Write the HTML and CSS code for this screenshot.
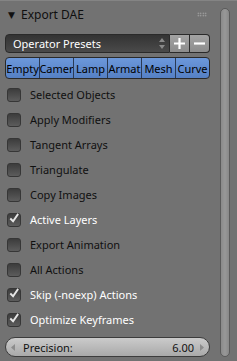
FILE: index.html
```html
<!DOCTYPE html>
<html>
<head>
<meta charset="utf-8">
<link rel="stylesheet" href="styles.css">
</head>
<body>
<div class="panel">
  <div class="header">
    <span class="tri">▼</span>
    <span class="title">Export DAE</span>
    <span class="grip"></span>
  </div>
  <div class="presets">
    <div class="menu">
      <span>Operator Presets</span>
      <svg class="updown" width="6" height="11" viewBox="0 0 6 11"><path d="M0 4 L3 0 L6 4Z M0 7 L3 11 L6 7Z" fill="#8a8a8a"/></svg>
    </div>
    <div class="btn"><svg width="13" height="13" viewBox="0 0 13 13"><path d="M6.5 1v11M1 6.5h11" stroke="#fff" stroke-width="2.2"/></svg></div>
    <div class="btn last"><svg width="13" height="13" viewBox="0 0 13 13"><path d="M1 6.5h11" stroke="#fff" stroke-width="2.2"/></svg></div>
  </div>
  <div class="tabs">
    <div class="tab">Empty</div>
    <div class="tab">Camer</div>
    <div class="tab">Lamp</div>
    <div class="tab">Armat</div>
    <div class="tab">Mesh</div>
    <div class="tab">Curve</div>
  </div>
  <div class="list">
    <div class="row"><span class="cb"></span><span class="lbl">Selected Objects</span></div>
    <div class="row"><span class="cb"></span><span class="lbl">Apply Modifiers</span></div>
    <div class="row"><span class="cb"></span><span class="lbl">Tangent Arrays</span></div>
    <div class="row"><span class="cb"></span><span class="lbl">Triangulate</span></div>
    <div class="row"><span class="cb"></span><span class="lbl">Copy Images</span></div>
    <div class="row on"><span class="cb"><svg width="13" height="13" viewBox="0 0 13 13"><path d="M2.5 6.5 L5.5 9.5 L11 1.5" stroke="#e6e6e6" stroke-width="2" fill="none"/></svg></span><span class="lbl">Active Layers</span></div>
    <div class="row"><span class="cb"></span><span class="lbl">Export Animation</span></div>
    <div class="row"><span class="cb"></span><span class="lbl">All Actions</span></div>
    <div class="row on"><span class="cb"><svg width="13" height="13" viewBox="0 0 13 13"><path d="M2.5 6.5 L5.5 9.5 L11 1.5" stroke="#e6e6e6" stroke-width="2" fill="none"/></svg></span><span class="lbl">Skip (-noexp) Actions</span></div>
    <div class="row on"><span class="cb"><svg width="13" height="13" viewBox="0 0 13 13"><path d="M2.5 6.5 L5.5 9.5 L11 1.5" stroke="#e6e6e6" stroke-width="2" fill="none"/></svg></span><span class="lbl">Optimize Keyframes</span></div>
  </div>
  <div class="slider">
    <svg width="4" height="7" viewBox="0 0 4 7"><path d="M4 0 L0 3.5 L4 7Z" fill="#8c8c8c"/></svg>
    <span class="sl-l">Precision:</span>
    <span class="sl-v">6.00</span>
    <svg width="4" height="7" viewBox="0 0 4 7"><path d="M0 0 L4 3.5 L0 7Z" fill="#8c8c8c"/></svg>
  </div>
  <div class="scrollbar"></div>
</div>
</body>
</html>
```
FILE: styles.css
```css
html, body { margin: 0; padding: 0; }
body {
  width: 237px; height: 361px; overflow: hidden;
  background: #727272;
  font-family: "Noto Sans", "DejaVu Sans", sans-serif;
  font-size: 11px;
}
.panel {
  position: relative;
  width: 237px; height: 361px;
  box-sizing: border-box;
  padding: 0 27px 0 5px;
  display: flex; flex-direction: column;
  border-top: 1px solid #848484;
}
.header {
  height: 26px;
  display: flex; align-items: center;
  color: #0f0f0f;
  font-size: 12px;
}
.tri { font-size: 9px; margin-left: 3px; width: 13px; color: #111; }
.title { flex: 1; }
.grip {
  width: 10px; height: 5px; margin-right: 3px;
  background-image: radial-gradient(circle, #b4b4b4 0.6px, transparent 0.9px);
  background-size: 2.5px 2.5px;
}
.presets {
  margin-top: 7px;
  height: 19px;
  display: flex;
}
.menu {
  flex: 1;
  display: flex; align-items: center; justify-content: space-between;
  padding: 0 4px 0 7px;
  color: #fff;
  background: linear-gradient(#333 0%, #4a4a4a 100%);
  border: 1px solid #2a2a2a;
  border-radius: 4px 0 0 4px;
}
.btn {
  width: 19px;
  display: flex; align-items: center; justify-content: center;
  background: linear-gradient(#a3a3a3, #8c8c8c);
  border: 1px solid #2a2a2a;
  border-left: none;
}
.btn.last { border-radius: 0 4px 4px 0; }
.tabs {
  margin-top: 4px;
  height: 20px;
  display: flex;
  border: 1px solid #2a2a2a;
  border-radius: 4px;
  overflow: hidden;
  background: linear-gradient(#6c98db, #5580c4);
}
.tab {
  flex: 1;
  display: flex; align-items: center; justify-content: center;
  overflow: hidden; white-space: nowrap;
  color: #000;
  border-left: 1px solid #2a3a55;
}
.tab:first-child { border-left: none; }
.list { margin-top: 3px; display: flex; flex-direction: column; }
.row {
  height: 25px;
  display: flex; align-items: center;
  color: #101010;
}
.row.on { color: #fff; }
.cb {
  width: 14px; height: 14px;
  margin: 0 9px 0 2px;
  box-sizing: border-box;
  border: 1px solid #363636;
  border-radius: 3px;
  background: linear-gradient(#3c3c3c, #5c5c5c);
  display: flex;
}
.cb svg { margin: -2px 0 0 0; }
.slider {
  margin-top: 5px;
  height: 20px;
  box-sizing: border-box;
  display: flex; align-items: center;
  padding: 0 5px;
  border: 1px solid #3c3c3c;
  border-radius: 10px;
  background: linear-gradient(#cbcbcb, #a9a9a9);
  color: #111;
}
.sl-l { margin-left: 8px; flex: 1; }
.sl-v { margin-right: 6px; }
.scrollbar {
  position: absolute;
  left: 220px; top: 7px;
  width: 10px; height: 349px;
  box-sizing: border-box;
  border: 1px solid #5a5a5a;
  border-radius: 5px;
  background: linear-gradient(90deg, #8a8a8a, #989898 50%, #888);
}
```
